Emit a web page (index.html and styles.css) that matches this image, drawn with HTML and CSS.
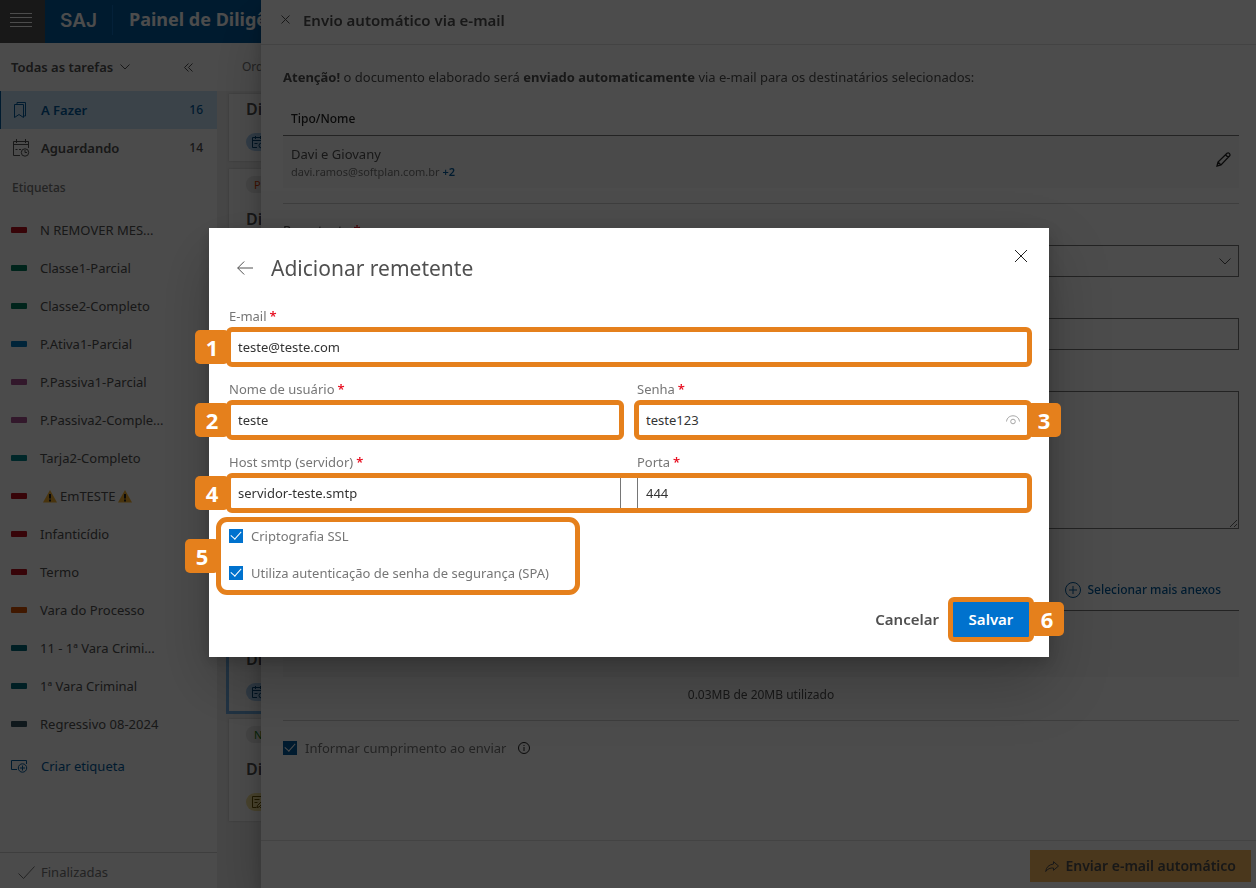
FILE: index.html
```html
<!DOCTYPE html>
<html lang="pt-BR">
<head>
    <meta charset="UTF-8">
    <meta name="viewport" content="width=device-width, initial-scale=1.0">
    <title>Painel de Diligências</title>
    <link rel="stylesheet" href="styles.css">
</head>
<body>

<!-- Top bar -->
<header class="topbar">
    <button class="menu-btn" type="button" aria-label="Menu">
        <svg width="22" height="14" viewBox="0 0 22 14" stroke="currentColor" stroke-width="1"><path d="M0 .5h22M0 4.5h22M0 9.5h22M0 13.5h22"/></svg>
    </button>
    <span class="logo">SAJ</span>
    <h1 class="page-title">Painel de Diligências</h1>
</header>

<div class="workspace">
    <!-- Sidebar -->
    <aside class="sidebar">
        <div class="sidebar-head">
            <button class="filter-btn" type="button">Todas as tarefas
                <svg width="10" height="6" viewBox="0 0 10 6" fill="none" stroke="currentColor"><path d="M.5.5 5 5 9.5.5"/></svg>
            </button>
            <button class="collapse-btn" type="button" aria-label="Recolher">
                <svg width="9" height="9" viewBox="0 0 9 9" fill="none" stroke="currentColor"><path d="M4.5.5l-4 4 4 4M8.500.5l-4 4 4 4"/></svg>
            </button>
        </div>
        <nav>
            <a class="task active" href="#">
                <svg width="18" height="18" viewBox="0 0 18 18" fill="none" stroke="currentColor"><path d="M2.500 3.500h9v13l-4.500-3-4.500 3zM5 3V1.500h8.500V15H12"/></svg>
                <span class="task-name">A Fazer</span><span>16</span>
            </a>
            <a class="task" href="#">
                <svg width="18" height="18" viewBox="0 0 18 18" fill="none" stroke="currentColor"><path d="M8 16.500H1.500v-14h15V9M1.500 5.500h15M4.500 0v4M13.500 0v4M3.500 10.500h2M7 10.500h2"/><circle cx="13" cy="13.500" r="3.700"/><path d="M13 11v2.500h2"/></svg>
                <span class="task-name">Aguardando</span><span>14</span>
            </a>
            <h2 class="labels-title">Etiquetas</h2>
            <a class="label-item" href="#"><i class="swatch red"></i>N REMOVER MES...</a>
            <a class="label-item" href="#"><i class="swatch green"></i>Classe1-Parcial</a>
            <a class="label-item" href="#"><i class="swatch green"></i>Classe2-Completo</a>
            <a class="label-item" href="#"><i class="swatch blue"></i>P.Ativa1-Parcial</a>
            <a class="label-item" href="#"><i class="swatch purple"></i>P.Passiva1-Parcial</a>
            <a class="label-item" href="#"><i class="swatch purple"></i>P.Passiva2-Comple...</a>
            <a class="label-item" href="#"><i class="swatch teal"></i>Tarja2-Completo</a>
            <a class="label-item" href="#"><i class="swatch red"></i>
                <span class="warn-label">
                    <svg width="14" height="13" viewBox="0 0 14 13"><path fill="#f5b02e" d="M7 0l7 12.500H0z"/><path stroke="#222" stroke-width="2" d="M7 4v4.500M7 9.500v2"/></svg>
                    EmTESTE
                    <svg width="14" height="13" viewBox="0 0 14 13"><path fill="#f5b02e" d="M7 0l7 12.500H0z"/><path stroke="#222" stroke-width="2" d="M7 4v4.500M7 9.500v2"/></svg>
                </span>
            </a>
            <a class="label-item" href="#"><i class="swatch red"></i>Infanticídio</a>
            <a class="label-item" href="#"><i class="swatch red"></i>Termo</a>
            <a class="label-item" href="#"><i class="swatch orange"></i>Vara do Processo</a>
            <a class="label-item" href="#"><i class="swatch petrol"></i>11 - 1ª Vara Crimi...</a>
            <a class="label-item" href="#"><i class="swatch petrol"></i>1ª Vara Criminal</a>
            <a class="label-item" href="#"><i class="swatch slate"></i>Regressivo 08-2024</a>
            <a class="label-item create" href="#">
                <svg width="17" height="14" viewBox="0 0 17 14" fill="none" stroke="currentColor"><path d="M6 10.500H.5v-9h15V5"/><circle cx="11.500" cy="9" r="4.200"/><path d="M11.500 6.500v5M9 9h5"/></svg>
                Criar etiqueta
            </a>
        </nav>
        <a class="done" href="#">
            <svg width="17" height="13" viewBox="0 0 17 13" fill="none" stroke="currentColor"><path d="M.5 7.500l5 5L16.500.5"/></svg>
            Finalizadas
        </a>
    </aside>

    <!-- Task list -->
    <main class="task-list">
        <div class="list-head">Ordenar</div>
        <div class="cards">
            <article class="card">
                <h3>Diligência</h3>
                <span class="chip chip-blue"><svg width="14" height="14" viewBox="0 0 14 14" fill="none" stroke="currentColor"><path d="M6 12.500H1.500v-10h11V6M1.500 5.500h11M4.500 1v3M9.500 1v3M3.500 8.500h3"/><circle cx="10.500" cy="10.500" r="2.500"/></svg></span>
            </article>
            <article class="card">
                <span class="tag tag-orange">Pendente</span>
                <h3>Diligência</h3>
                <span class="chip chip-blue"></span>
            </article>
            <article class="card">
                <span class="tag"></span>
                <h3></h3>
                <span class="chip chip-blue"></span>
            </article>
            <article class="card">
                <span class="tag"></span>
                <h3></h3>
                <span class="chip chip-blue"></span>
            </article>
            <article class="card">
                <span class="tag"></span>
                <h3></h3>
                <span class="chip chip-blue"></span>
            </article>
            <article class="card selected">
                <span class="tag"></span>
                <h3>Diligência</h3>
                <span class="chip chip-blue"><svg width="14" height="14" viewBox="0 0 14 14" fill="none" stroke="currentColor"><path d="M6 12.500H1.500v-10h11V6M1.500 5.500h11M4.500 1v3M9.500 1v3M3.500 8.500h3"/><circle cx="10.500" cy="10.500" r="2.500"/></svg></span>
            </article>
            <article class="card">
                <span class="tag tag-green">Nova</span>
                <h3>Diligência</h3>
                <span class="chip chip-yellow"><svg width="14" height="14" viewBox="0 0 14 14" fill="none" stroke="currentColor"><path d="M10.500 4V1.500h-9v11h4M3.500 4.500h5M3.500 7.500h3M12.500 4.500l-6 6-.5 2 2-.5 6-6M9 12.500h4V9"/></svg></span>
            </article>
        </div>
    </main>
</div>

<!-- Side panel: automatic e-mail -->
<section class="drawer">
    <div class="drawer-head">
        <button type="button" aria-label="Fechar painel">
            <svg width="9" height="9" viewBox="0 0 9 9" stroke="currentColor"><path d="M.5.5l8 8M8.500.5l-8 8"/></svg>
        </button>
        <h2>Envio automático via e-mail</h2>
    </div>
    <div class="drawer-body">
        <p class="notice"><b>Atenção!</b> o documento elaborado será <b>enviado automaticamente</b> via e-mail para os destinatários selecionados:</p>
        <table class="recipients">
            <thead>
                <tr><th colspan="2">Tipo/Nome</th></tr>
            </thead>
            <tbody>
                <tr>
                    <td>
                        <div class="name">Davi e Giovany</div>
                        <div class="mail">davi.ramos@softplan.com.br <a href="#">+2</a></div>
                    </td>
                    <td class="edit">
                        <button type="button" aria-label="Editar">
                            <svg width="15" height="15" viewBox="0 0 15 15" fill="none" stroke="currentColor" stroke-width="1.300"><path d="M1 14l1-4L11 1.200q1.300-.8 2.300.2t.5 2.300L5 13zM9.500 2.700l2.800 2.800M2 10l3 3"/></svg>
                        </button>
                    </td>
                </tr>
            </tbody>
        </table>
        <hr>
        <div class="panel-field">
            <label for="remetente">Remetente <em>*</em></label>
            <div class="select-wrap">
                <select id="remetente"><option></option></select>
                <svg class="chevron" width="12" height="7" viewBox="0 0 12 7" fill="none" stroke="currentColor"><path d="M.5.5l5.500 5.500L11.500.5"/></svg>
            </div>
        </div>
        <div class="panel-field unlabelled">
            <input type="text" aria-label="Assunto">
        </div>
        <div class="panel-field unlabelled">
            <textarea aria-label="Mensagem"></textarea>
        </div>
        <div class="attach-head">
            <button type="button">
                <svg width="16" height="16" viewBox="0 0 16 16" fill="none" stroke="currentColor"><circle cx="8" cy="8" r="7.500"/><path d="M8 4v8M4 8h8"/></svg>
                Selecionar mais anexos
            </button>
        </div>
        <div class="attach-box"></div>
        <p class="usage">0.03MB de 20MB utilizado</p>
        <hr>
        <div class="check inform">
            <input id="informar" type="checkbox" checked>
            <label for="informar">Informar cumprimento ao enviar</label>
            <svg width="12" height="12" viewBox="0 0 12 12" fill="none" stroke="currentColor"><circle cx="6" cy="6" r="5.500"/><path d="M6 5v4M6 3v1"/></svg>
        </div>
    </div>
    <div class="drawer-foot">
        <button class="send-btn" type="button">
            <svg width="14" height="11" viewBox="0 0 14 11" fill="none" stroke="currentColor"><path d="M8.500.7l5 4.300-5 4.300V7Q3.500 6.500.7 10.500 1.500 4 8.500 3z"/></svg>
            Enviar e-mail automático
        </button>
    </div>
</section>

<!-- Dialog: new sender -->
<div class="overlay">
    <form class="dialog" role="dialog" aria-labelledby="dialog-title">
        <div class="dialog-head">
            <button type="button" aria-label="Voltar">
                <svg width="16" height="14" viewBox="0 0 16 14" fill="none" stroke="currentColor"><path d="M16 7H.7M7.200.5L.7 7l6.500 6.500"/></svg>
            </button>
            <h2 id="dialog-title">Adicionar remetente</h2>
            <button class="close" type="button" aria-label="Fechar">
                <svg width="12" height="12" viewBox="0 0 12 12" stroke="currentColor"><path d="M0 0l12 12M12 0L0 12"/></svg>
            </button>
        </div>

        <div class="fields">
            <div class="field wide">
                <label for="email">E-mail<em>*</em></label>
                <div class="control marked">
                    <input id="email" type="text" value="teste@teste.com">
                    <span class="badge left">1</span>
                </div>
            </div>
            <div class="field">
                <label for="usuario">Nome de usuário<em>*</em></label>
                <div class="control marked">
                    <input id="usuario" type="text" value="teste">
                    <span class="badge left">2</span>
                </div>
            </div>
            <div class="field">
                <label for="senha">Senha<em>*</em></label>
                <div class="control marked">
                    <input id="senha" type="text" value="teste123">
                    <svg class="eye" width="14" height="10" viewBox="0 0 14 10" fill="none" stroke="currentColor"><path d="M.5 6.500C1 2.500 4 .8 7 .8s6 1.700 6.500 5.700"/><circle cx="7" cy="6.500" r="2.300"/></svg>
                    <span class="badge right">3</span>
                </div>
            </div>
            <div class="server marked">
                <div class="field">
                    <label for="host">Host smtp (servidor)<em>*</em></label>
                    <div class="control"><input id="host" type="text" value="servidor-teste.smtp"></div>
                </div>
                <div class="field">
                    <label for="porta">Porta<em>*</em></label>
                    <div class="control"><input id="porta" type="text" value="444"></div>
                </div>
                <span class="badge left">4</span>
            </div>
        </div>

        <div class="checks marked">
            <div class="check">
                <input id="ssl" type="checkbox" checked>
                <label for="ssl">Criptografia SSL</label>
            </div>
            <div class="check">
                <input id="spa" type="checkbox" checked>
                <label for="spa">Utiliza autenticação de senha de segurança (SPA)</label>
            </div>
            <span class="badge left">5</span>
        </div>

        <div class="dialog-foot">
            <button class="cancel-btn" type="button">Cancelar</button>
            <div class="save marked">
                <button class="save-btn" type="submit">Salvar</button>
                <span class="badge right">6</span>
            </div>
        </div>
    </form>
</div>

</body>
</html>
```
FILE: styles.css
```css
* {
    margin: 0;
    padding: 0;
    box-sizing: border-box;
}

body {
    display: flex;
    flex-direction: column;
    height: 100vh;
    overflow: hidden;
    font-family: "Segoe UI", "Noto Sans", sans-serif;
    font-size: 13px;
    line-height: 20px;
    color: #505050;
    background: #fff;
}

button, input, select, textarea {
    font: inherit;
    color: inherit;
}

button {
    background: none;
    border: none;
    cursor: pointer;
}

a {
    color: inherit;
    text-decoration: none;
}

svg {
    display: block;
    flex: none;
}

em {
    font-style: normal;
    font-weight: 600;
    color: #e81123;
}

hr {
    border: none;
    border-top: 1px solid #d0d0d0;
}

/* Top bar */
.topbar {
    display: flex;
    align-items: center;
    flex: none;
    height: 43px;
    color: #fff;
    background: #005a9e;
}

.menu-btn {
    display: flex;
    align-items: center;
    justify-content: center;
    width: 45px;
    height: 43px;
    padding: 0 3px 4px 0;
    color: #fff;
    background: #505050;
}

.logo {
    width: 68px;
    height: 30px;
    margin-bottom: 4px;
    padding-left: 15px;
    font-family: "Inter", sans-serif;
    font-size: 19px;
    font-weight: 600;
    line-height: 31px;
    border-right: 1px solid #106ebe;
}

.page-title {
    padding: 0 0 6px 16px;
    font-size: 18px;
    font-weight: 700;
}

.workspace {
    display: flex;
    flex: 1;
    min-height: 0;
}

/* Sidebar */
.sidebar {
    display: flex;
    flex-direction: column;
    flex: none;
    width: 217px;
    background: #fbfbfb;
}

.sidebar-head {
    display: flex;
    align-items: center;
    justify-content: space-between;
    height: 48px;
    padding: 0 24px 0 11px;
}

.filter-btn {
    display: flex;
    align-items: center;
    gap: 7px;
    font-weight: 600;
}

.sidebar nav {
    flex: 1;
}

.task {
    display: flex;
    align-items: center;
    gap: 11px;
    height: 38px;
    padding: 0 14px 0 12px;
    font-weight: 600;
}

.task.active {
    padding-left: 11px;
    color: #005a9e;
    background: #c7e0f4;
    border-left: 1px solid #005a9e;
}

.task-name {
    flex: 1;
}

.task span:last-child {
    font-size: 12px;
    font-weight: 500;
}

.labels-title {
    padding: 11px 12px 13px;
    font-size: 12px;
    font-weight: 500;
    line-height: 20px;
    color: #767676;
}

.label-item {
    display: flex;
    align-items: center;
    gap: 13px;
    height: 38px;
    padding-left: 11px;
}

.swatch {
    width: 16px;
    height: 6px;
    border-radius: 1px;
}

.red { background: #b8101c; }
.green { background: #007a5a; }
.blue { background: #0078c0; }
.purple { background: #a8528f; }
.teal { background: #008489; }
.orange { background: #d85000; }
.petrol { background: #006a78; }
.slate { background: #35505f; }

.warn-label {
    display: flex;
    align-items: center;
    gap: 3px;
    padding-left: 3px;
}

.create {
    height: 46px;
    color: #005a9e;
}

.done {
    display: flex;
    align-items: center;
    gap: 6px;
    height: 36px;
    padding: 3px 0 0 18px;
    color: #767676;
    border-top: 1px solid #d0d0d0;
}

/* Task list */
.task-list {
    flex: 1;
    min-width: 0;
    background: #ececec;
}

.list-head {
    height: 48px;
    padding-left: 25px;
    font-size: 12px;
    line-height: 48px;
    color: #767676;
    background: #fbfbfb;
}

.cards {
    display: flex;
    flex-direction: column;
    gap: 8px;
    padding: 3px 12px;
}

.card {
    display: flex;
    flex-direction: column;
    align-items: flex-start;
    gap: 14px;
    padding: 5px 17px 10px;
    background: #fff;
    box-shadow: 0 0 2px rgba(0, 0, 0, 0.2);
}

.card h3 {
    height: 20px;
    font-size: 16px;
    font-weight: 600;
    line-height: 20px;
}

.card.selected {
    outline: 3px solid #71afe5;
}

.tag {
    height: 17px;
    margin-top: 2px;
    padding: 0 8px;
    font-size: 11px;
    line-height: 17px;
    border-radius: 8px;
    background: #e8e8e8;
}

.tag + h3 {
    margin-top: 2px;
}

.tag-orange { color: #d83b01; }
.tag-green { color: #107c10; }

.chip {
    height: 18px;
    width: 60px;
    padding: 2px 5px;
    border-radius: 9px;
}

.chip-blue {
    color: #004578;
    background: #a9cdf0;
}

.chip-yellow {
    color: #6b5500;
    background: #f5e29a;
}

/* Side panel */
.drawer {
    position: fixed;
    inset: 0 0 0 261px;
    display: flex;
    flex-direction: column;
    background: #fff;
    box-shadow: 0 26px 58px rgba(0, 0, 0, 0.22), 0 5px 14px rgba(0, 0, 0, 0.18);
}

.drawer-head {
    display: flex;
    align-items: center;
    gap: 13px;
    height: 45px;
    padding: 0 20px 5px;
    border-bottom: 1px solid #e1e1e1;
}

.drawer-head h2 {
    font-size: 15px;
    font-weight: 600;
}

.drawer-body {
    flex: 1;
    padding: 22px 17px 0 22px;
}

.recipients {
    width: 100%;
    margin: 22px 0 15px;
    border-collapse: collapse;
    text-align: left;
}

.recipients th {
    padding: 0 8px 6px;
    font-size: 12px;
    font-weight: 500;
    color: #222;
    border-bottom: 1px solid #767676;
}

.recipients tbody tr {
    background: #f8f8f8;
}

.recipients td {
    height: 52px;
    padding: 1px 8px;
}

.recipients .edit {
    width: 30px;
    color: #222;
}

.mail {
    font-size: 11px;
    line-height: 16px;
    color: #767676;
}

.mail a {
    font-weight: 600;
    color: #005a9e;
}

.panel-field {
    display: flex;
    flex-direction: column;
    gap: 5px;
    margin-top: 16px;
}

.panel-field.unlabelled {
    margin-top: 41px;
}

.panel-field input,
.panel-field select,
.panel-field textarea {
    display: block;
    width: 100%;
    height: 32px;
    background: #fff;
    border: 1px solid #767676;
}

.panel-field select {
    appearance: none;
}

.panel-field textarea {
    height: 138px;
}

.select-wrap {
    position: relative;
}

.chevron {
    position: absolute;
    top: 13px;
    right: 8px;
    pointer-events: none;
}

.attach-head {
    display: flex;
    justify-content: flex-end;
    margin-top: 51px;
    padding: 0 18px 10px;
    border-bottom: 1px solid #767676;
}

.attach-head button {
    display: flex;
    align-items: center;
    gap: 6px;
    font-size: 12px;
    font-weight: 500;
    color: #005a9e;
}

.attach-box {
    height: 66px;
    background: #f8f8f8;
}

.usage {
    margin: 8px 0 15px;
    font-size: 12px;
    text-align: center;
}

.check {
    display: flex;
    align-items: center;
    gap: 8px;
    color: #767676;
}

.check input {
    display: flex;
    justify-content: center;
    flex: none;
    width: 14px;
    height: 14px;
    appearance: none;
    background: #0072ce;
}

/* Tick mark */
.check input::before {
    content: "";
    width: 5px;
    height: 9px;
    border: solid #fff;
    border-width: 0 1px 1px 0;
    transform: rotate(42deg);
}

.inform {
    margin-top: 17px;
}

.inform input {
    background: #005a9e;
}

.inform svg {
    margin-left: 4px;
    color: #222;
}

.drawer-foot {
    display: flex;
    justify-content: flex-end;
    padding: 9px 5px 6px;
    border-top: 1px solid #e1e1e1;
}

.send-btn {
    display: flex;
    align-items: center;
    gap: 6px;
    height: 32px;
    padding: 0 15px;
    font-size: 14px;
    font-weight: 600;
    background: #f9b85f;
}

/* Dialog */
.overlay {
    position: fixed;
    inset: 0;
    display: flex;
    align-items: center;
    justify-content: center;
    padding: 0 0 4px 2px;
    background: rgba(0, 0, 0, 0.7);
}

.dialog {
    width: 840px;
    max-width: 90%;
    padding: 22px 20px 20px;
    background: #fff;
    box-shadow: 0 26px 58px rgba(0, 0, 0, 0.22), 0 5px 14px rgba(0, 0, 0, 0.18);
}

.dialog-head {
    display: flex;
    align-items: center;
    gap: 18px;
    height: 36px;
    margin-bottom: 20px;
    padding-left: 8px;
}

.dialog-head h2 {
    flex: 1;
    font-size: 21px;
    font-weight: 400;
    line-height: 32px;
}

.dialog-head .close {
    align-self: flex-start;
    padding: 0 2px;
    color: #222;
}

.fields {
    display: grid;
    grid-template-columns: 1fr 1fr;
    gap: 16px;
}

.wide, .server {
    grid-column: 1 / -1;
}

.server {
    display: grid;
    grid-template-columns: 1fr 1fr;
    gap: 16px;
}

.field label {
    display: block;
    margin-bottom: 5px;
    color: #767676;
}

.field em {
    margin-left: 3px;
}

.control input {
    display: block;
    width: 100%;
    height: 32px;
    padding: 0 8px;
    color: #333;
    background: #fff;
    border: 1px solid #767676;
}

.eye {
    position: absolute;
    top: 11px;
    right: 9px;
    color: #a6a6a6;
}

.checks {
    display: flex;
    flex-direction: column;
    align-items: flex-start;
    gap: 17px;
    width: fit-content;
    margin: 17px 0 19px;
}

.dialog-foot {
    display: flex;
    align-items: center;
    justify-content: flex-end;
    gap: 14px;
}

.cancel-btn, .save-btn {
    height: 35px;
    font-size: 15px;
    font-weight: 600;
}

.save-btn {
    display: block;
    width: 76px;
    color: #fff;
    background: #0072ce;
}

/* Numbered callouts */
.marked {
    position: relative;
}

.marked::after {
    content: "";
    position: absolute;
    inset: -4px -3px;
    border: 5px solid #e5801c;
    border-radius: 6px;
    pointer-events: none;
}

.server.marked::after {
    top: 21px;
}

.checks.marked::after {
    inset: -9px -31px -12px -13px;
    border-radius: 11px;
}

.save.marked::after {
    inset: -5px;
}

.badge {
    position: absolute;
    bottom: -1px;
    width: 34px;
    height: 34px;
    font-family: "Open Sans", sans-serif;
    font-size: 22px;
    font-weight: 700;
    line-height: 34px;
    text-align: center;
    color: #fff;
    background: #e5801c;
    border-radius: 5px;
}

.badge.left { left: -34px; }
.badge.right { right: -32px; }

.checks .badge {
    bottom: 10px;
    left: -44px;
}

.save .badge {
    bottom: 1px;
    right: -35px;
}
```
